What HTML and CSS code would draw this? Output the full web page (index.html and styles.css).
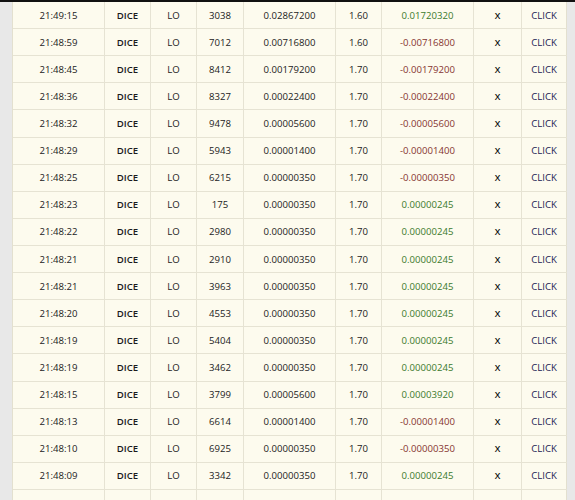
FILE: index.html
```html
<!DOCTYPE html>
<html>
<head>
<meta charset="utf-8">
<link rel="stylesheet" href="styles.css">
</head>
<body>
<div class="topbar"></div>
<div class="page">
  <div class="side"></div>
  <div class="bets">
    <div class="row"><span>21:49:15</span><span class="game">DICE</span><span>LO</span><span>3038</span><span>0.02867200</span><span>1.60</span><span class="win">0.01720320</span><span class="x">X</span><span class="click">CLICK</span></div>
    <div class="row"><span>21:48:59</span><span class="game">DICE</span><span>LO</span><span>7012</span><span>0.00716800</span><span>1.60</span><span class="loss">-0.00716800</span><span class="x">X</span><span class="click">CLICK</span></div>
    <div class="row"><span>21:48:45</span><span class="game">DICE</span><span>LO</span><span>8412</span><span>0.00179200</span><span>1.70</span><span class="loss">-0.00179200</span><span class="x">X</span><span class="click">CLICK</span></div>
    <div class="row"><span>21:48:36</span><span class="game">DICE</span><span>LO</span><span>8327</span><span>0.00022400</span><span>1.70</span><span class="loss">-0.00022400</span><span class="x">X</span><span class="click">CLICK</span></div>
    <div class="row"><span>21:48:32</span><span class="game">DICE</span><span>LO</span><span>9478</span><span>0.00005600</span><span>1.70</span><span class="loss">-0.00005600</span><span class="x">X</span><span class="click">CLICK</span></div>
    <div class="row"><span>21:48:29</span><span class="game">DICE</span><span>LO</span><span>5943</span><span>0.00001400</span><span>1.70</span><span class="loss">-0.00001400</span><span class="x">X</span><span class="click">CLICK</span></div>
    <div class="row"><span>21:48:25</span><span class="game">DICE</span><span>LO</span><span>6215</span><span>0.00000350</span><span>1.70</span><span class="loss">-0.00000350</span><span class="x">X</span><span class="click">CLICK</span></div>
    <div class="row"><span>21:48:23</span><span class="game">DICE</span><span>LO</span><span>175</span><span>0.00000350</span><span>1.70</span><span class="win">0.00000245</span><span class="x">X</span><span class="click">CLICK</span></div>
    <div class="row"><span>21:48:22</span><span class="game">DICE</span><span>LO</span><span>2980</span><span>0.00000350</span><span>1.70</span><span class="win">0.00000245</span><span class="x">X</span><span class="click">CLICK</span></div>
    <div class="row"><span>21:48:21</span><span class="game">DICE</span><span>LO</span><span>2910</span><span>0.00000350</span><span>1.70</span><span class="win">0.00000245</span><span class="x">X</span><span class="click">CLICK</span></div>
    <div class="row"><span>21:48:21</span><span class="game">DICE</span><span>LO</span><span>3963</span><span>0.00000350</span><span>1.70</span><span class="win">0.00000245</span><span class="x">X</span><span class="click">CLICK</span></div>
    <div class="row"><span>21:48:20</span><span class="game">DICE</span><span>LO</span><span>4553</span><span>0.00000350</span><span>1.70</span><span class="win">0.00000245</span><span class="x">X</span><span class="click">CLICK</span></div>
    <div class="row"><span>21:48:19</span><span class="game">DICE</span><span>LO</span><span>5404</span><span>0.00000350</span><span>1.70</span><span class="win">0.00000245</span><span class="x">X</span><span class="click">CLICK</span></div>
    <div class="row"><span>21:48:19</span><span class="game">DICE</span><span>LO</span><span>3462</span><span>0.00000350</span><span>1.70</span><span class="win">0.00000245</span><span class="x">X</span><span class="click">CLICK</span></div>
    <div class="row"><span>21:48:15</span><span class="game">DICE</span><span>LO</span><span>3799</span><span>0.00005600</span><span>1.70</span><span class="win">0.00003920</span><span class="x">X</span><span class="click">CLICK</span></div>
    <div class="row"><span>21:48:13</span><span class="game">DICE</span><span>LO</span><span>6614</span><span>0.00001400</span><span>1.70</span><span class="loss">-0.00001400</span><span class="x">X</span><span class="click">CLICK</span></div>
    <div class="row"><span>21:48:10</span><span class="game">DICE</span><span>LO</span><span>6925</span><span>0.00000350</span><span>1.70</span><span class="loss">-0.00000350</span><span class="x">X</span><span class="click">CLICK</span></div>
    <div class="row"><span>21:48:09</span><span class="game">DICE</span><span>LO</span><span>3342</span><span>0.00000350</span><span>1.70</span><span class="win">0.00000245</span><span class="x">X</span><span class="click">CLICK</span></div>
    <div class="row"><span>21:48:08</span><span class="game">DICE</span><span>LO</span><span>4771</span><span>0.00001400</span><span>1.70</span><span class="win">0.00000980</span><span class="x">X</span><span class="click">CLICK</span></div>
  </div>
  <div class="side right"></div>
</div>
</body>
</html>
```

FILE: styles.css
```css
html, body {
  margin: 0;
  padding: 0;
  height: 500px;
  overflow: hidden;
  background: #e8e8e8;
}
.topbar {
  height: 2px;
  background: #111;
}
.page {
  display: flex;
}
.side {
  width: 12px;
  flex: none;
  background: #e8e8e8;
}
.side.right {
  width: 9px;
}
.bets {
  width: 554px;
  flex: none;
  background: #fdfbee;
  border-left: 1px solid #e3e0cf;
  font-family: "Open Sans", "Noto Sans", sans-serif;
  font-size: 9.6px;
  color: #222;
}
.row {
  display: grid;
  grid-template-columns: 92px 46px 46px 47px 92px 46px 92px 48px 45px;
  height: 27.12px;
  box-sizing: border-box;
  border-bottom: 1px solid #e6e3d3;
}
.row span {
  display: flex;
  align-items: center;
  justify-content: center;
  border-right: 1px solid #e6e3d3;
  white-space: nowrap;
}
.row span:last-child {
  border-right: 1px solid #e3e0cf;
}
.game {
  font-weight: 600;
  color: #1a1a1a;
}
.win {
  color: #3b7a2c;
}
.loss {
  color: #863530;
}
.x {
  font-weight: 600;
  font-size: 9px;
  color: #111;
}
.click {
  color: #1a1a52;
}
```
